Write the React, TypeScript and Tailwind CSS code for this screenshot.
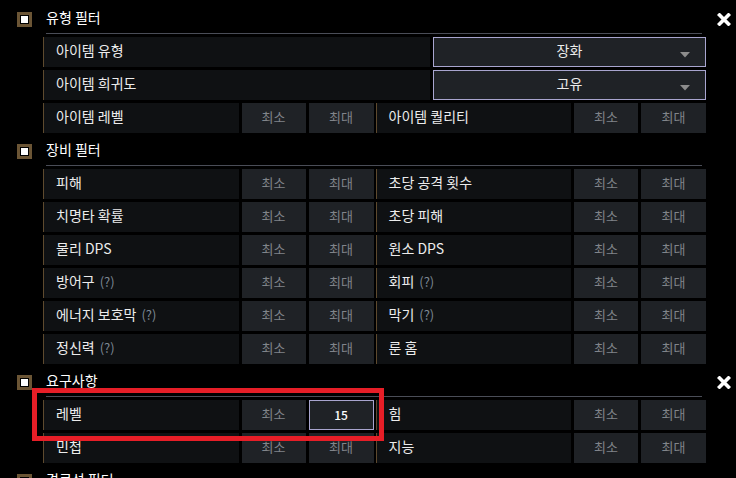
import React from "react";

const FONT = { fontFamily: '"Noto Sans CJK KR", "Noto Sans", sans-serif' };

function Checkbox() {
  return (
    <div className="w-[15px] h-[15px] border-[3px] border-[#6b5535] bg-black p-[1px]">
      <div className="w-full h-full bg-white" />
    </div>
  );
}

function CloseX() {
  return (
    <svg width="14" height="13" viewBox="0 0 14 13" className="block">
      <path d="M2.5 2 L11.5 11 M11.5 2 L2.5 11" stroke="#ffffff" strokeWidth="3.6" strokeLinecap="square" />
    </svg>
  );
}

function Help() {
  return <span className="ml-[5px] text-[13px] text-[#7d8894]">(?)</span>;
}

function Label({ text, help }: { text: string; help?: boolean }) {
  return (
    <div className="flex-1 h-full bg-[#0f1113] border-l border-[#5e4a2e] flex items-center pl-[12px] pb-[3px] text-[14px] text-[#ececec] whitespace-nowrap">
      <span>{text}</span>
      {help && <Help />}
    </div>
  );
}

function Btn({ text, w }: { text: string; w: string }) {
  return (
    <div className={`${w} h-full bg-[#1f2226] flex items-center justify-center pb-[2px] text-[13px] text-[#80848a]`}>
      {text}
    </div>
  );
}

function InputBox({ value, w }: { value: string; w: string }) {
  return (
    <div className={`${w} h-full bg-[#1f2226] border border-[#a8a5cf] flex items-center justify-center text-[12px] font-medium text-white`}>
      {value}
    </div>
  );
}

type Cell = { label: string; help?: boolean; maxValue?: string };

function Half({ cell }: { cell: Cell }) {
  return (
    <div className="flex h-[30px] gap-[3px]">
      <Label text={cell.label} help={cell.help} />
      <Btn text="최소" w="w-[64px]" />
      {cell.maxValue ? <InputBox value={cell.maxValue} w="w-[65px]" /> : <Btn text="최대" w="w-[65px]" />}
    </div>
  );
}

function PairRow({ left, right }: { left: Cell; right: Cell }) {
  return (
    <div className="grid grid-cols-2 gap-x-[2px]">
      <Half cell={left} />
      <Half cell={right} />
    </div>
  );
}

function SelectRow({ label, value }: { label: string; value: string }) {
  return (
    <div className="flex h-[30px] gap-[3px]">
      <Label text={label} />
      <div className="w-[273px] h-full bg-[#1f2226] border border-[#a8a5cf] relative flex items-center justify-center pb-[3px] text-[14px] text-[#ececec]">
        {value}
        <svg width="10" height="6" viewBox="0 0 10 6" className="absolute right-[15px] top-[14px]">
          <path d="M0 0 H10 L5 5.5 Z" fill="#8c8c8c" />
        </svg>
      </div>
    </div>
  );
}

function Section({
  title,
  close,
  first,
  children,
}: {
  title: string;
  close?: boolean;
  first?: boolean;
  children?: React.ReactNode;
}) {
  return (
    <div className={first ? "pt-[12px]" : "pt-[11px]"}>
      <div className="flex h-[22px]">
        <div className="w-[46px] pl-[17px]">
          <Checkbox />
        </div>
        <div className="w-[656px] border-b border-[#4a4d57] text-[14px] leading-[20px] text-white">
          <div className="-mt-[5px]">{title}</div>
        </div>
        {close && (
          <div className="ml-[15px] pt-[1px]">
            <CloseX />
          </div>
        )}
      </div>
      <div className="ml-[43px] w-[663px] mt-[3px] flex flex-col gap-[3px]">{children}</div>
    </div>
  );
}

export default function App() {
  return (
    <div className="relative w-[736px] h-[478px] bg-black overflow-hidden" style={FONT}>
      <Section title="유형 필터" close first>
        <SelectRow label="아이템 유형" value="장화" />
        <SelectRow label="아이템 희귀도" value="고유" />
        <PairRow left={{ label: "아이템 레벨" }} right={{ label: "아이템 퀄리티" }} />
      </Section>
      <Section title="장비 필터">
        <PairRow left={{ label: "피해" }} right={{ label: "초당 공격 횟수" }} />
        <PairRow left={{ label: "치명타 확률" }} right={{ label: "초당 피해" }} />
        <PairRow left={{ label: "물리 DPS" }} right={{ label: "원소 DPS" }} />
        <PairRow left={{ label: "방어구", help: true }} right={{ label: "회피", help: true }} />
        <PairRow left={{ label: "에너지 보호막", help: true }} right={{ label: "막기", help: true }} />
        <PairRow left={{ label: "정신력", help: true }} right={{ label: "룬 홈" }} />
      </Section>
      <Section title="요구사항" close>
        <PairRow left={{ label: "레벨", maxValue: "15" }} right={{ label: "힘" }} />
        <PairRow left={{ label: "민첩" }} right={{ label: "지능" }} />
      </Section>
      <Section title="경로석 필터" />
      <div className="absolute left-[32px] top-[388px] w-[352px] h-[53px] border-[5px] border-[#e61e27] pointer-events-none" />
    </div>
  );
}
